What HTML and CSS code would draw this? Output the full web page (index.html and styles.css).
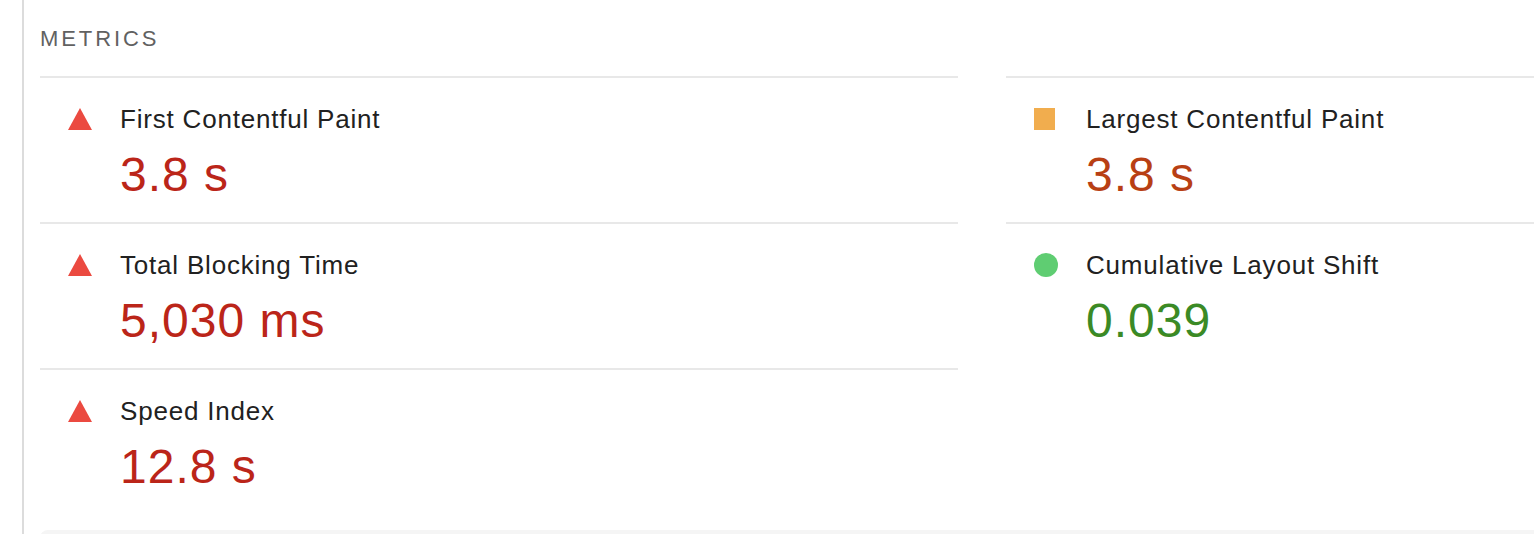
FILE: index.html
```html
<!DOCTYPE html>
<html lang="en">
<head>
    <meta charset="UTF-8">
    <meta name="viewport" content="width=device-width, initial-scale=1.0">
    <title>Metrics</title>
    <link rel="stylesheet" href="styles.css">
</head>
<body>
    <div class="report">
        <section class="metrics">
            <h2 class="metrics-title">Metrics</h2>
            <div class="metrics-grid">
                <div class="metric">
                    <svg class="icon" width="24" height="22" viewBox="0 0 24 22"><polygon points="12,0 24,22 0,22" fill="#eb4a40"/></svg>
                    <div class="metric-body">
                        <div class="metric-name">First Contentful Paint</div>
                        <div class="metric-value fail">3.8 s</div>
                    </div>
                </div>
                <div class="metric">
                    <span class="icon square"></span>
                    <div class="metric-body">
                        <div class="metric-name">Largest Contentful Paint</div>
                        <div class="metric-value average">3.8 s</div>
                    </div>
                </div>
                <div class="metric">
                    <svg class="icon" width="24" height="22" viewBox="0 0 24 22"><polygon points="12,0 24,22 0,22" fill="#eb4a40"/></svg>
                    <div class="metric-body">
                        <div class="metric-name">Total Blocking Time</div>
                        <div class="metric-value fail">5,030 ms</div>
                    </div>
                </div>
                <div class="metric">
                    <span class="icon circle"></span>
                    <div class="metric-body">
                        <div class="metric-name">Cumulative Layout Shift</div>
                        <div class="metric-value pass">0.039</div>
                    </div>
                </div>
                <div class="metric">
                    <svg class="icon" width="24" height="22" viewBox="0 0 24 22"><polygon points="12,0 24,22 0,22" fill="#eb4a40"/></svg>
                    <div class="metric-body">
                        <div class="metric-name">Speed Index</div>
                        <div class="metric-value fail">12.8 s</div>
                    </div>
                </div>
            </div>
        </section>
        <div class="next-section"></div>
    </div>
</body>
</html>
```

FILE: styles.css
```css
body {
    margin: 0;
    padding: 0;
    background: #ffffff;
    font-family: "Liberation Sans", Arial, sans-serif;
    color: #212121;
    overflow: hidden;
}
.report {
    margin-left: 22px;
    border-left: 2px solid #dcdcdc;
    padding-left: 16px;
    height: 534px;
    overflow: hidden;
}
.metrics-title {
    margin: 0;
    padding-top: 28px;
    font-size: 22px;
    line-height: 22px;
    font-weight: normal;
    text-transform: uppercase;
    letter-spacing: 2.9px;
    color: #616161;
}
.metrics-grid {
    display: grid;
    grid-template-columns: 918px 918px;
    column-gap: 48px;
    margin-top: 26px;
}
.metric {
    display: flex;
    align-items: flex-start;
    border-top: 2px solid #e8e8e8;
    padding: 25px 0 19px 28px;
}
.icon {
    flex: none;
    margin-top: 5px;
    margin-right: 28px;
}
.square {
    width: 21px;
    height: 22px;
    background: #f1ad4e;
    margin-right: 31px;
}
.circle {
    width: 24px;
    height: 24px;
    border-radius: 50%;
    background: #5fcd72;
    margin-top: 4px;
}
.metric-name {
    font-size: 26px;
    line-height: 32px;
    letter-spacing: 0.8px;
}
.metric-value {
    font-size: 48px;
    line-height: 56px;
    letter-spacing: 1px;
    margin-top: 12px;
}
.fail {
    color: #bb2519;
}
.average {
    color: #b83f14;
}
.pass {
    color: #3b8a25;
}
.next-section {
    margin-top: 16px;
    height: 40px;
    background: #f5f5f5;
    border-radius: 8px 0 0 0;
}
```
